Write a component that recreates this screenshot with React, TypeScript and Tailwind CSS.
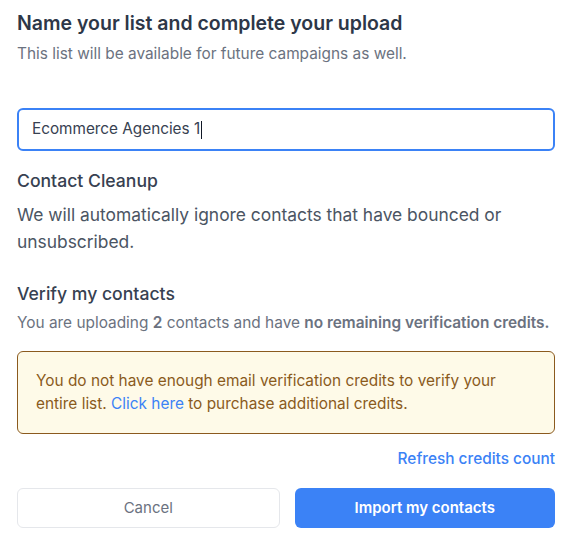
import React from "react";

export default function App() {
  return (
    <div
      className="w-[573px] h-[544px] bg-white pl-[17px] pr-[18px] pt-[9px]"
      style={{ fontFamily: "Inter, 'Noto Sans', sans-serif" }}
    >
      <h1 className="text-[19.5px] leading-[28px] font-semibold text-[#2d3748] whitespace-nowrap">
        Name your list and complete your upload
      </h1>
      <p className="mt-[7px] text-[15.4px] leading-[20px] text-[#6b7280] whitespace-nowrap">
        This list will be available for future campaigns as well.
      </p>

      <div className="mt-[44px] h-[43px] w-full rounded-[6px] border-2 border-[#3b82f6] flex items-center pl-[13px]">
        <span className="text-[15.3px] text-[#374151]">Ecommerce Agencies 1</span>
        <span className="ml-[1px] w-[1px] h-[18px] bg-[#111827]" />
      </div>

      <h2 className="mt-[18px] text-[17.6px] leading-[24px] font-medium text-[#374151]">
        Contact Cleanup
      </h2>
      <p className="mt-[8px] text-[17.4px] leading-[27px] text-[#4b5563]">
        We will automatically ignore contacts that have bounced or unsubscribed.
      </p>

      <h2 className="mt-[27px] text-[17.6px] leading-[24px] font-medium text-[#374151]">
        Verify my contacts
      </h2>
      <p className="mt-[7px] text-[15.4px] leading-[20px] text-[#6b7280] whitespace-nowrap">
        You are uploading <span className="font-semibold">2</span> contacts and have{" "}
        <span className="font-semibold">no remaining verification credits.</span>
      </p>

      <div className="mt-[18px] rounded-[6px] border border-[#8b5a1e] bg-[#fefae8] pl-[18px] pr-[16px] pt-[17px] pb-[18px]">
        <p className="text-[15.4px] leading-[23px] text-[#8a5a1c]">
          You do not have enough email verification credits to verify your
          entire list. <span className="text-[#3b82f6]">Click here</span> to
          purchase additional credits.
        </p>
      </div>

      <div className="mt-[15px] flex justify-end">
        <span className="text-[15.4px] leading-[20px] font-medium text-[#3b82f6]">
          Refresh credits count
        </span>
      </div>

      <div className="mt-[19px] flex gap-[15px]">
        <button className="flex-1 h-[40px] rounded-[6px] border border-[#e5e7eb] bg-white text-[15px] text-[#6b7280]">
          Cancel
        </button>
        <button className="flex-1 h-[40px] rounded-[6px] bg-[#3b82f6] text-[15px] font-semibold text-white">
          Import my contacts
        </button>
      </div>
    </div>
  );
}
